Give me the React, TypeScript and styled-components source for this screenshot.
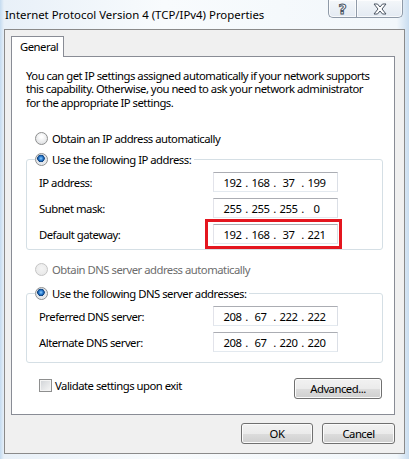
import * as React from 'react'
import styled, { createGlobalStyle } from 'styled-components'

const GlobalStyle = createGlobalStyle`
  html, body {
    margin: 0;
    padding: 0;
  }
  body {
    font-family: 'Noto Sans', 'Liberation Sans', sans-serif;
    font-size: 11.3px;
    color: #000;
  }
`

const Window = styled.div`
  width: 409px;
  height: 459px;
  display: flex;
  flex-direction: column;
  background: linear-gradient(90deg, #c4dbf0 0, #e8f0f8 4px, #f8fbfd 40%, #f2f7fb 97%, #c9ddf0 100%);
`

const TitleBar = styled.div`
  height: 29px;
  display: flex;
  justify-content: space-between;
  align-items: flex-start;
  padding-left: 5px;
`

const Title = styled.div`
  line-height: 29px;
  white-space: nowrap;
  font-size: 11.4px;
`

const Caption = styled.div`
  display: flex;
  margin-right: 6px;
`

const CaptionButton = styled.div<{ $w: number; $side: 'left' | 'right' }>`
  width: ${p => p.$w}px;
  height: 18px;
  box-sizing: border-box;
  display: flex;
  align-items: center;
  justify-content: center;
  border: 1px solid #8f9aa8;
  border-top: none;
  ${p => (p.$side === 'left' ? 'border-right: none;' : '')}
  border-radius: ${p => (p.$side === 'left' ? '0 0 0 5px' : '0 0 5px 0')};
  background: linear-gradient(#f4f7fa, #e3eaf2);
  box-shadow: inset 0 0 0 1px rgba(255, 255, 255, 0.7);
`

const HelpGlyph = styled.span`
  font-family: 'DejaVu Sans', sans-serif;
  font-weight: bold;
  font-size: 14px;
  line-height: 14px;
  color: #fff;
  -webkit-text-stroke: 1px #4b5563;
`

const Client = styled.div`
  margin: 0 4px 0 4px;
  height: 425px;
  box-sizing: border-box;
  border: 1px solid #8a8a8a;
  background: #f0f0f0;
  padding: 6px 9px 0 6px;
  display: flex;
  flex-direction: column;
  letter-spacing: -0.5px;
`

const TabStrip = styled.div`
  display: flex;
  margin-bottom: -1px;
  position: relative;
  z-index: 1;
`

const Tab = styled.div`
  width: 53px;
  height: 21px;
  box-sizing: border-box;
  border: 1px solid #898c95;
  border-bottom: none;
  background: #fff;
  padding-left: 8px;
  line-height: 19px;
`

const Panel = styled.div`
  height: 359px;
  box-sizing: border-box;
  border: 1px solid #898c95;
  background: #fff;
  padding: 12px 11px 0 14px;
  display: flex;
  flex-direction: column;
  white-space: nowrap;
`

const Intro = styled.p`
  margin: 0;
  line-height: 13.4px;
`

const OptionRow = styled.label<{ $top: number; $disabled?: boolean }>`
  display: flex;
  align-items: center;
  gap: 4px;
  height: 16px;
  margin-top: ${p => p.$top}px;
  padding-left: 9px;
  color: ${p => (p.$disabled ? '#6d6d6d' : '#000')};
`

const Radio = styled.span<{ $checked?: boolean; $disabled?: boolean }>`
  width: 13px;
  height: 13px;
  box-sizing: border-box;
  border-radius: 50%;
  border: 1px solid ${p => (p.$disabled ? '#c5c5c5' : '#8e8f8f')};
  background: ${p =>
    p.$checked
      ? 'radial-gradient(circle at 45% 40%, #8fd0ff 0, #2a7bd0 2px, #0c3f7a 3.5px, #dfe3e8 4px, #f6f6f6 100%)'
      : p.$disabled
      ? 'radial-gradient(circle at 50% 40%, #f4f4f4, #e6e6e6)'
      : 'radial-gradient(circle at 50% 35%, #ffffff 10%, #d6d8db 100%)'};
  flex: none;
`

const Group = styled.fieldset<{ $top: number; $bottom: number }>`
  margin: ${p => p.$top}px 0 0 0;
  padding: 0 11px ${p => p.$bottom}px 8px;
  border: 1px solid #d5dfe5;
  border-radius: 3px;
  min-width: 0;
`

const Legend = styled.legend`
  padding: 0 3px 0 0;
  height: 16px;
  display: flex;
  align-items: center;
  gap: 4px;
`

const Fields = styled.div`
  display: flex;
  flex-direction: column;
  gap: 6px;
  padding: 5px 0 0 4px;
`

const FieldRow = styled.div`
  display: flex;
  align-items: center;
  height: 20px;
`

const FieldLabel = styled.span`
  width: 174px;
`

const IpBox = styled.div<{ $marked?: boolean }>`
  position: relative;
  width: 125px;
  height: 20px;
  box-sizing: border-box;
  border: 1px solid;
  border-color: #abadb3 #dbdfe6 #e3e9ef #e2e3ea;
  display: flex;
  align-items: center;
  padding-left: 8px;
  &::after {
    content: '';
    display: ${p => (p.$marked ? 'block' : 'none')};
    position: absolute;
    left: -9px;
    right: -5px;
    top: -6px;
    bottom: -6px;
    border: 3px solid #e4161f;
  }
`

const Octet = styled.span`
  width: 21px;
  text-align: center;
`

const Dot = styled.span`
  width: 7px;
  text-align: center;
`

const Footer = styled.div`
  display: flex;
  justify-content: space-between;
  align-items: flex-start;
  margin-top: 15px;
  padding-right: 1px;
`

const CheckRow = styled.label`
  display: flex;
  align-items: center;
  gap: 3px;
  height: 16px;
  margin-top: -1px;
  padding-left: 13px;
`

const Checkbox = styled.span`
  width: 13px;
  height: 13px;
  box-sizing: border-box;
  border: 1px solid #8e8f8f;
  background: linear-gradient(135deg, #cfd2d6, #f7f7f7);
  box-shadow: inset 0 0 0 1px #f4f4f4;
  flex: none;
`

const Button = styled.button<{ $w: number }>`
  width: ${p => p.$w}px;
  height: 21px;
  box-sizing: border-box;
  padding: 0;
  font: inherit;
  letter-spacing: inherit;
  color: #000;
  border: 1px solid #707070;
  border-radius: 3px;
  background: linear-gradient(#f2f2f2 0%, #ebebeb 50%, #dddddd 51%, #cfcfcf 100%);
  box-shadow: inset 0 0 0 1px #fbfbfb;
`

const DialogButtons = styled.div`
  display: flex;
  justify-content: flex-end;
  gap: 9px;
  margin-top: 8px;
`

const Ip: React.FC<{ value: string; marked?: boolean }> = ({ value, marked }) => {
  const parts = value.split('.')
  return (
    <IpBox $marked={marked}>
      {parts.map((p, i) => (
        <React.Fragment key={i}>
          <Octet>{p}</Octet>
          {i < parts.length - 1 && <Dot>.</Dot>}
        </React.Fragment>
      ))}
    </IpBox>
  )
}

const Field: React.FC<{ label: string; value: string; marked?: boolean }> = ({ label, value, marked }) => (
  <FieldRow>
    <FieldLabel>{label}</FieldLabel>
    <Ip value={value} marked={marked} />
  </FieldRow>
)

const App: React.FC = () => (
  <Window>
    <GlobalStyle />
    <TitleBar>
      <Title>Internet Protocol Version 4 (TCP/IPv4) Properties</Title>
      <Caption>
        <CaptionButton $w={28} $side="left">
          <HelpGlyph>?</HelpGlyph>
        </CaptionButton>
        <CaptionButton $w={47} $side="right">
          <svg width="14" height="12" viewBox="0 0 14 12">
            <path
              d="M1 1h3.5L7 4l2.5-3H13L9 6l4 5H9.5L7 8l-2.5 3H1l4-5z"
              fill="#fff"
              stroke="#4b5563"
              strokeWidth="1"
              strokeLinejoin="round"
            />
          </svg>
        </CaptionButton>
      </Caption>
    </TitleBar>
    <Client>
      <TabStrip>
        <Tab>General</Tab>
      </TabStrip>
      <Panel>
        <Intro>
          You can get IP settings assigned automatically if your network supports
          <br />
          this capability. Otherwise, you need to ask your network administrator
          <br />
          for the appropriate IP settings.
        </Intro>
        <OptionRow $top={21}>
          <Radio />
          Obtain an IP address automatically
        </OptionRow>
        <Group $top={5} $bottom={5}>
          <Legend>
            <Radio $checked />
            Use the following IP address:
          </Legend>
          <Fields>
            <Field label="IP address:" value="192.168.37.199" />
            <Field label="Subnet mask:" value="255.255.255.0" />
            <Field label="Default gateway:" value="192.168.37.221" marked />
          </Fields>
        </Group>
        <OptionRow $top={11} $disabled>
          <Radio $disabled />
          Obtain DNS server address automatically
        </OptionRow>
        <Group $top={8} $bottom={10}>
          <Legend>
            <Radio $checked />
            Use the following DNS server addresses:
          </Legend>
          <Fields>
            <Field label="Preferred DNS server:" value="208.67.222.222" />
            <Field label="Alternate DNS server:" value="208.67.220.220" />
          </Fields>
        </Group>
        <Footer>
          <CheckRow>
            <Checkbox />
            Validate settings upon exit
          </CheckRow>
          <Button $w={88}>Advanced...</Button>
        </Footer>
      </Panel>
      <DialogButtons>
        <Button $w={72}>OK</Button>
        <Button $w={73}>Cancel</Button>
      </DialogButtons>
    </Client>
  </Window>
)

export default App
